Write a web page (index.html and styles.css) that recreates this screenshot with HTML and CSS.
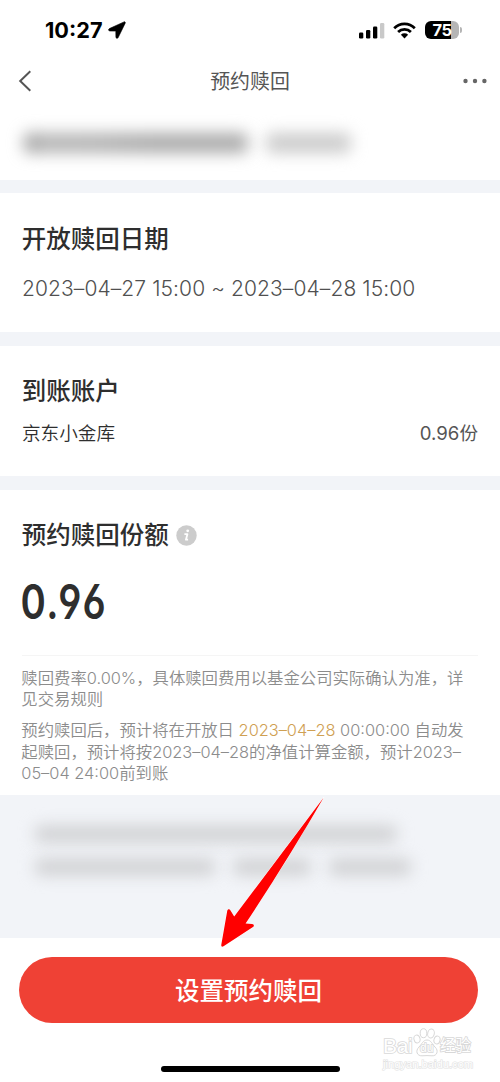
FILE: index.html
```
<!DOCTYPE html>
<html lang="zh-CN">
<head>
<meta charset="utf-8">
<title>预约赎回</title>
<link rel="stylesheet" href="styles.css">
</head>
<body>
<div class="phone">
  <header class="status">
    <span class="clock">10:27</span>
    <svg class="loc" width="18" height="18" viewBox="0 0 18 18"><path d="M16 .9 1.400 7.600c-1.400.8-1 2.400.6 2.400l5.800.1.1 5.900c.1 1.600 1.600 1.800 2.300.5L17.200 2.200c.4-.9-.3-1.700-1.200-1.300z" stroke="#000" stroke-width=".6"/></svg>
    <div class="indicators">
      <svg width="26" height="17" viewBox="0 0 26 17"><rect x="0" y="10.500" width="4.300" height="6" rx="1.200"/><rect x="7" y="8" width="4.300" height="8.500" rx="1.200"/><rect x="14" y="4.500" width="4.300" height="12" rx="1.200"/><rect x="21" y="1" width="4.300" height="15.500" rx="1.200" fill="#c9c9c9"/></svg>
      <svg class="wifi" width="23" height="17" viewBox="0 0 23 17"><g fill="none" stroke="#000" stroke-width="2.700"><path d="M1.200 6.200a14.500 14.500 0 0 1 20.600 0"/><path d="M5.100 10a9 9 0 0 1 12.800 0"/></g><path d="M7.900 12.700a5.200 5.200 0 0 1 7.200 0l-3.600 3.700z"/></svg>
      <div class="battery"><span class="level">75</span><i class="cap"></i></div>
    </div>
  </header>
  <nav class="nav">
    <svg class="back" width="14" height="22" viewBox="0 0 14 22"><path d="M12.300 1.200 2.200 11l10.100 9.800" fill="none" stroke="#555" stroke-width="2"/></svg>
    <h1 class="title">预约赎回</h1>
    <svg class="more" width="24" height="6" viewBox="0 0 24 6" fill="#666"><circle cx="2.500" cy="3" r="2.200"/><circle cx="12" cy="3" r="2.200"/><circle cx="21.400" cy="3" r="2.200"/></svg>
  </nav>
  <section class="fund"><div class="smudge name"></div><div class="smudge code"></div></section>
  <section class="card dates">
    <h2>开放赎回日期</h2>
    <p class="range">2023–04–27 15:00 ~ 2023–04–28 15:00</p>
  </section>
  <section class="card account">
    <h2>到账账户</h2>
    <div class="row"><span class="vault">京东小金库</span><span class="amount">0.96份</span></div>
  </section>
  <section class="card share">
    <h2>预约赎回份额<svg class="info" width="21" height="21" viewBox="0 0 21 21"><circle cx="10.500" cy="10.500" r="10.200" fill="#ccc"/><circle cx="11.700" cy="5.800" r="1.400" fill="#fff"/><path d="M8.400 9.200h3l-1.500 5.500h2.200" fill="none" stroke="#fff" stroke-width="1.800" stroke-linejoin="round"/></svg></h2>
    <div class="big">0.96</div>
    <div class="notes">
      <p>赎回费率0.00%，具体赎回费用以基金公司实际确认为准，详<br>见交易规则</p>
      <p>预约赎回后，预计将在开放日 <b>2023–04–28</b> 00:00:00 自动发<br>起赎回，预计将按2023–04–28的净值计算金额，预计2023–<br>05–04 24:00前到账</p>
    </div>
  </section>
  <section class="hint">
    <div class="smudge first"></div>
    <div class="second"><div class="smudge a"></div><div class="smudge b"></div><div class="smudge c"></div></div>
    <svg class="arrow" width="108" height="156" viewBox="0 0 108 156"><path d="M110.700 2.500 Q74 66 32.600 128.600l6.500.5c2 .2 2.300 2 .9 3L10.500 151.300c-1.600 1-2.400.3-2.200-1.500l5.900-33.700c.4-2.200 2.400-2.400 3.300-.6l3.700 6z" fill="red" stroke="#fff" stroke-width="1" paint-order="stroke"/></svg>
  </section>
  <footer class="foot">
    <button class="submit">设置预约赎回</button>
    <div class="home"></div>
    <div class="watermark">
      <div class="brand"><span class="bai">Bai</span><span class="paw"><svg width="28" height="29" viewBox="0 0 28 29" fill="#fff" stroke="#d8d8d8" stroke-width="1"><ellipse cx="4" cy="11" rx="3" ry="4" transform="rotate(-15 4 11)"/><ellipse cx="10.500" cy="5.200" rx="3.300" ry="4.500"/><ellipse cx="18" cy="5.500" rx="3.300" ry="4.500" transform="rotate(12 18 5.500)"/><ellipse cx="24" cy="12" rx="3" ry="4" transform="rotate(15 24 12)"/><path d="M14 12c-4 0-5 4-8 7-4 4-2 9 3 8.800 3-.3 7-.3 10 0 5 .3 7-5 3-8.800-3-3-4-7-8-7z"/></svg><em>du</em></span><span class="exp">经验</span></div>
      <div class="site">jingyan.baidu.com</div>
    </div>
  </footer>
</div>
</body>
</html>
```
FILE: styles.css
```
* { box-sizing: border-box; }
body { margin: 0; background: #fff; font-family: Inter, "Noto Sans CJK SC", sans-serif; color: #2e2e2e; }
h1, h2, p { margin: 0; }
.phone { width: 500px; height: 1082px; overflow: hidden; display: flex; flex-direction: column; }
.status { height: 56px; padding: 4px 38px 0 45px; display: flex; align-items: center; flex: none; }
.clock { font-size: 21.700px; font-weight: 700; color: #000; line-height: 24px; width: 58px; }
.loc { margin-left: 5px; }
.indicators { margin-left: auto; display: flex; align-items: center; }
.wifi { margin-left: 8px; }
.battery { display: flex; align-items: center; margin-left: 9px; }
.level { width: 34px; height: 18px; border-radius: 6px; background: linear-gradient(90deg, #000 26px, #b5b5b5 26px); color: #fff; font-size: 16.500px; font-weight: 700; line-height: 18px; text-align: center; letter-spacing: -.5px; }
.cap { width: 2px; height: 6px; margin-left: 1px; border-radius: 0 3px 3px 0; background: #b5b5b5; }
.nav { height: 50px; padding: 0 13px 0 18px; display: flex; align-items: center; justify-content: space-between; flex: none; }
.back { width: 24px; margin-left: -5px; }
.title { font-size: 19.900px; line-height: 30px; padding-top: 2px; font-weight: 400; color: #555; }
.fund { height: 87px; flex: none; border-bottom: 13px solid #f2f4f8; padding: 27px 0 0 24px; display: flex; gap: 18px; }
.smudge { height: 20px; border-radius: 6px; filter: blur(8px); background: #b0b0b0; }
.name { width: 224px; background: linear-gradient(90deg, #999, #b5b5b5 20px, #b3b3b3 70px, #aaa 130px, #aaa); }
.code { width: 85px; background: #cbcbcb; }
.card { flex: none; padding: 0 22px; }
.card h2 { font-size: 24.5px; line-height: 36px; font-weight: 500; display: flex; align-items: center; margin-left: -.3px; }
.dates { height: 153px; padding-top: 28px; border-bottom: 14px solid #f2f4f8; }
.range { margin-top: 18px; font-size: 21px; line-height: 28px; font-weight: 350; letter-spacing: .09px; color: #505050; white-space: nowrap; }
.account { height: 144px; padding-top: 27px; border-bottom: 14px solid #f2f4f8; }
.row { display: flex; justify-content: space-between; align-items: center; margin-top: 10px; line-height: 28px; }
.vault { font-size: 18.6px; font-weight: 350; }
.amount { font-size: 18.600px; color: #555; }
.share { height: 305px; padding-top: 27px; }
.info { margin-left: 7px; }
.big { margin-top: 23px; font-size: 48px; line-height: 52px; font-weight: 600; font-feature-settings: "ss01", "cv03", "cv04"; letter-spacing: 2px; transform: translateX(-1.500px) scaleX(.8); transform-origin: 0 50%; }
.notes { margin-top: 27px; border-top: 1px solid #f5f5f5; padding-top: 12px; font-size: 16.38px; line-height: 21.200px; color: #8c8c8c; white-space: nowrap; font-weight: 350; }
.notes p { margin-left: -.7px; }
.notes p + p { margin-top: 10px; }
.notes b { color: #cfa052; font-weight: 350; }
.hint { height: 143px; flex: none; background: #f2f4f8; position: relative; padding: 31px 0 0 35px; }
.hint .smudge { height: 16px; background: #cecfd1; filter: blur(8px); }
.first { width: 362px; }
.second { display: flex; margin-top: 17px; gap: 18px; }
.a { width: 180px; } .b { width: 78px; } .c { width: 82px; }
.arrow { position: absolute; left: 213px; top: 0; overflow: visible; z-index: 2; }
.foot { height: 144px; position: relative; padding: 19px 22px 0 19px; }
.submit { display: block; width: 459px; height: 66px; border: 0; border-radius: 33px; background: #ef4135; color: #fff; font: 500 24.5px/66px Inter, "Noto Sans CJK SC", sans-serif; padding: 1px 0 0; }
.home { width: 179px; height: 6px; border-radius: 3px; background: #000; margin: 43px 0 0 142px; }
.watermark { position: absolute; left: 383px; top: 90px; color: #fff; font-family: "Liberation Sans", "Noto Sans CJK SC", sans-serif; -webkit-text-stroke: 1.600px #d8d8d8; paint-order: stroke fill; }
.brand { display: flex; align-items: flex-end; height: 29px; }
.bai { font-size: 21px; font-weight: 400; line-height: 22px; width: 30px; letter-spacing: -.3px; }
.paw { position: relative; width: 27px; height: 29px; }
.paw svg { display: block; paint-order: normal; }
.paw em { position: absolute; left: 7px; bottom: 2px; font-size: 12px; line-height: 14px; font-weight: 400; font-style: normal; }
.exp { font-size: 15.5px; font-weight: 400; line-height: 22px; }
.site { font-size: 11.200px; line-height: 15px; -webkit-text-stroke: 1.200px #e2e2e2; }
```
